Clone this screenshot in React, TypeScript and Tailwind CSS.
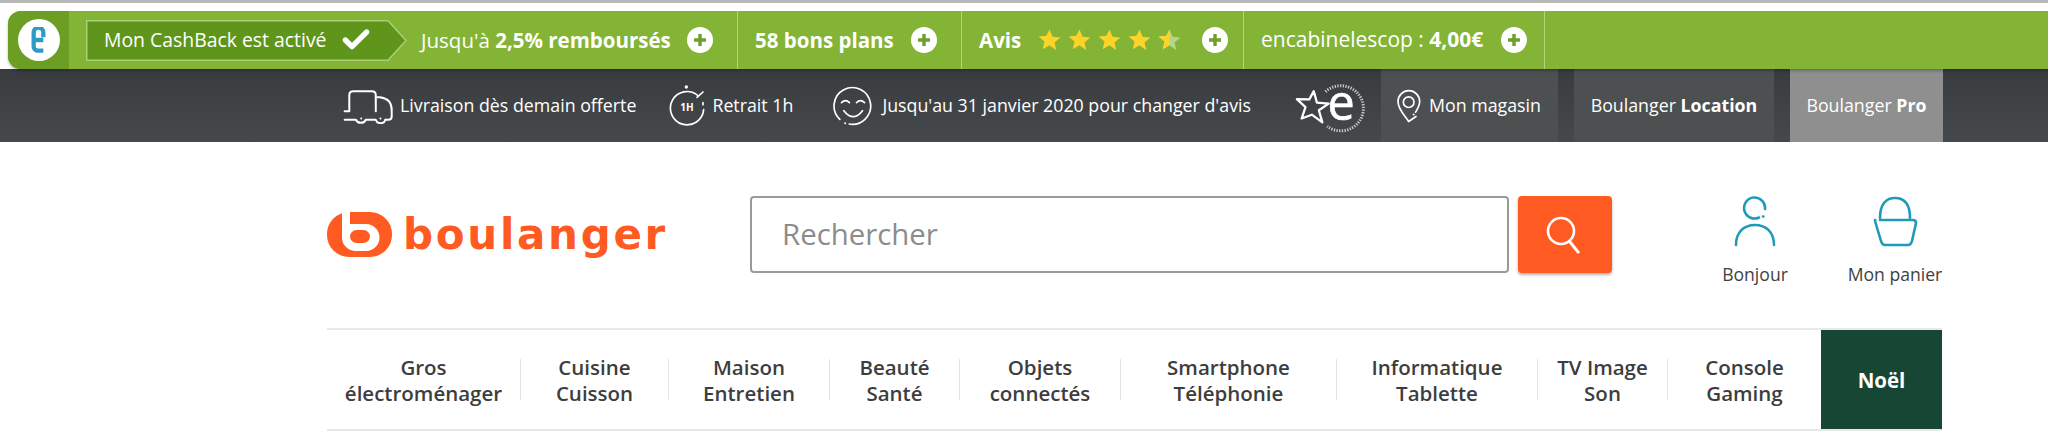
import React from 'react';
import { Check } from 'lucide-react';

const Plus = ({ className = '' }: { className?: string }) => (
  <span className={`flex h-[26px] w-[26px] shrink-0 items-center justify-center rounded-full bg-white ${className}`}>
    <svg viewBox="0 0 14 14" className="h-[14px] w-[14px]" fill="none" stroke="#6e9f2a" strokeWidth="3.4">
      <path d="M7 1v12M1 7h12" />
    </svg>
  </span>
);

const STAR = 'M12 1.5l3 6.9 7.5.7-5.7 4.9 1.7 7.4L12 16.6l-6.5 3.8 1.7-7.4-5.7-4.9 7.5-.7z';

const Stars = () => (
  <div className="ml-[16px] flex gap-[5px]">
    {[0, 1, 2, 3].map((i) => (
      <svg key={i} viewBox="0 0 24 24" className="h-[25px] w-[25px]">
        <path d={STAR} fill="#fdd32a" />
      </svg>
    ))}
    <svg viewBox="0 0 24 24" className="h-[25px] w-[25px]">
      <path d={STAR} fill="#b4d68b" />
      <path d="M12 1.5v15.1l-6.5 3.8 1.7-7.4-5.7-4.9 7.5-.7z" fill="#fdd32a" />
    </svg>
  </div>
);

const Truck = () => (
  <svg viewBox="20 30 160 110" className="h-[37px] w-[53px] shrink-0" fill="none" stroke="#fff" strokeWidth="6" strokeLinecap="round" strokeLinejoin="round">
    <path d="M28 102h14V54q0-12 12-12h56q12 0 12 12v48" />
    <path d="M122 60h12q36 4 36 38v20q0 10-10 10h-9" />
    <path d="M28 128h34a16 14 0 0 0 30 0h30a15 14 0 0 0 29 0" />
    <circle cx="78" cy="124" r="3" fill="#fff" stroke="none" />
    <circle cx="136" cy="124" r="3" fill="#fff" stroke="none" />
  </svg>
);

const Stopwatch = () => (
  <svg viewBox="20 25 120 135" className="h-[45px] w-[40px] shrink-0" fill="none" stroke="#fff" strokeWidth="5" strokeLinecap="round">
    <path d="M112 62A50 50 0 1 0 130 105" />
    <path d="M110 68l18-16M128 84v6" />
    <circle cx="78" cy="37" r="5" fill="#fff" stroke="none" />
    <text x="80" y="110" textAnchor="middle" fontSize="30" fontWeight="700" fill="#fff" stroke="none" fontFamily="'Open Sans', sans-serif">1H</text>
  </svg>
);

const Smile = () => (
  <svg viewBox="515 28 125 120" className="h-[40px] w-[42px] shrink-0" fill="none" stroke="#fff" strokeWidth="5" strokeLinecap="round">
    <path d="M538 128A55 55 0 1 1 566 142" />
    <path d="M543 78q12-12 24 0M588 78q12-12 24 0M550 102q28 36 56 0" />
    <circle cx="554" cy="140" r="3" fill="#fff" stroke="none" />
  </svg>
);

const StarE = () => (
  <svg viewBox="30 10 220 150" className="h-[50px] w-[73px] shrink-0 overflow-visible" fill="none" stroke="#fff">
    <path d="M87 45l10 36 37 3-31 21 11 38-33-24-32 12 12-36-27-25 39 1z" strokeWidth="7" strokeLinejoin="round" transform="translate(6 -3) scale(.96)" />
    <text x="172" y="128" textAnchor="middle" fontSize="146" fill="#fff" stroke="#fff" strokeWidth="2" fontFamily="'Open Sans', sans-serif">e</text>
    <path d="M125 42A68 68 0 1 1 130 146" strokeWidth="9" strokeDasharray="4 4" opacity=".7" />
  </svg>
);

const Pin = () => (
  <svg viewBox="335 48 78 104" className="h-[35px] w-[26px] shrink-0" fill="none" stroke="#fff" strokeWidth="5" strokeLinecap="round" strokeLinejoin="round">
    <path d="M395 133l-22 15c-10-16-32-36-32-60a32 32 0 0 1 65 0c0 12-6 22-12 32" />
    <circle cx="373" cy="90" r="16" />
    <circle cx="388" cy="127" r="3" fill="#fff" stroke="none" />
  </svg>
);

const Person = () => (
  <svg viewBox="0 0 42 52" className="h-[52px] w-[42px]" fill="none" stroke="#1f9ab9" strokeWidth="2.6" strokeLinecap="round">
    <path d="M31 13A10.5 10.5 0 1 0 25 21.5" />
    <path d="M29 20.5h.4" />
    <path d="M2 49c0-13 8-20 19-20s19 7 19 20" />
  </svg>
);

const Basket = () => (
  <svg viewBox="0 0 46 52" className="h-[52px] w-[46px]" fill="none" stroke="#1f9ab9" strokeWidth="2.6" strokeLinecap="round" strokeLinejoin="round">
    <path d="M8 22C8 8 14 2 23 2s15 6 15 20" />
    <path d="M3 24h.3M8 24h33q3 0 3 3l-4 18q-1 4-4 4H13q-3 0-4-4L3 25" />
  </svg>
);

const NAV = [
  { a: 'Gros', b: 'électroménager', w: 'w-[194px]' },
  { a: 'Cuisine', b: 'Cuisson', w: 'w-[148px]' },
  { a: 'Maison', b: 'Entretien', w: 'w-[161px]' },
  { a: 'Beauté', b: 'Santé', w: 'w-[130px]' },
  { a: 'Objets', b: 'connectés', w: 'w-[161px]' },
  { a: 'Smartphone', b: 'Téléphonie', w: 'w-[216px]' },
  { a: 'Informatique', b: 'Tablette', w: 'w-[201px]' },
  { a: 'TV Image', b: 'Son', w: 'w-[130px]' },
  { a: 'Console', b: 'Gaming', w: 'w-[153px]' },
];

export default function App() {
  return (
    <div className="h-[444px] w-[2048px] overflow-hidden bg-white font-['Open_Sans',sans-serif]">
      <div className="h-[3px] bg-[#b8b8b8]" />
      <div className="h-[8px] bg-white pl-2" />

      {/* cashback bar */}
      <div className="relative z-10 ml-2 flex h-[58px] items-center rounded-l-[13px] bg-[#84b435] text-[20.5px] text-white shadow-[0_2px_3px_rgba(0,0,0,0.25)]">
        <div className="flex h-full w-[61px] shrink-0 items-center justify-center rounded-l-[13px] bg-[#6b9e22]">
          <div className="flex h-[42px] w-[42px] items-center justify-center rounded-full bg-white">
            <svg viewBox="0 0 14 24" className="h-[26px] w-[15px]" fill="none" stroke="#2d9ac7" strokeWidth="4">
              <path d="M2.5 12V5a4.5 4.5 0 0 1 9 0v4.5M2.5 12h9M2.5 12v6a4 4 0 0 0 4 4h5" />
            </svg>
          </div>
        </div>
        <div className="relative ml-[17px] flex h-[41px] w-[321px] shrink-0 items-center pl-[18px] text-[19.4px]">
          <svg viewBox="0 0 321 41" className="absolute inset-0 h-[41px] w-[321px]">
            <path d="M.75.75H302L320 20.5 302 40.25H.75z" fill="#5f951a" stroke="#a9cf77" strokeWidth="1.5" />
          </svg>
          <span className="relative whitespace-nowrap">Mon CashBack est activé</span>
          <Check className="relative ml-[13px] h-[32px] w-[32px]" strokeWidth={4} />
        </div>
        <div className="ml-[14px] flex h-full w-[317px] shrink-0 items-center border-r border-[#b3d37f]">
          <span className="whitespace-nowrap">Jusqu'à <b className="font-bold">2,5% remboursés</b></span>
          <Plus className="ml-[16px]" />
        </div>
        <div className="flex h-full w-[224px] shrink-0 items-center border-r border-[#b3d37f] pl-[17px]">
          <b className="font-bold whitespace-nowrap">58 bons plans</b>
          <Plus className="ml-[17px]" />
        </div>
        <div className="flex h-full w-[282px] shrink-0 items-center border-r border-[#b3d37f] pl-[17px]">
          <b className="font-bold">Avis</b>
          <Stars />
          <Plus className="ml-[20px]" />
        </div>
        <div className="flex h-full w-[301px] shrink-0 items-center border-r border-[#b3d37f] pl-[17px] text-[21px]">
          <span className="whitespace-nowrap">encabinelescop : <b className="font-bold">4,00€</b></span>
          <Plus className="ml-[18px]" />
        </div>
      </div>

      {/* dark links bar */}
      <div className="flex h-[73px] items-center bg-gradient-to-b from-[#393c3f] to-[#46494b] pl-[342px] text-[17.8px] whitespace-nowrap text-white">
        <Truck />
        <span className="ml-[5px]">Livraison dès demain offerte</span>
        <div className="ml-[31px]"><Stopwatch /></div>
        <span className="ml-[5px]">Retrait 1h</span>
        <div className="ml-[39px]"><Smile /></div>
        <span className="ml-[8px]">Jusqu'au 31 janvier 2020 pour changer d'avis</span>
        <div className="ml-[43px]"><StarE /></div>
        <div className="ml-[14px] flex h-full w-[177px] items-center bg-[#4c5051] pl-[15px]">
          <Pin />
          <span className="ml-[7px]">Mon magasin</span>
        </div>
        <div className="ml-[16px] flex h-full w-[200px] items-center justify-center bg-[#4c5051]">
          <span>Boulanger <b className="font-bold">Location</b></span>
        </div>
        <div className="ml-[16px] flex h-full w-[153px] items-center justify-center bg-[#8f8f8f]">
          <span>Boulanger <b className="font-bold">Pro</b></span>
        </div>
      </div>

      {/* logo + search */}
      <div className="flex h-[186px] items-start pl-[327px] pt-[54px]">
        <div className="mt-[16px] flex w-[423px] items-start">
          <svg viewBox="0 0 65 45" className="h-[45px] w-[65px] shrink-0">
            <rect width="65" height="45" rx="22" fill="#ff5a21" />
            <path d="M15 0H23V12H39A13.5 13.5 0 0 1 39 39H28A13.5 13.5 0 0 1 15 25.5Z" fill="#fff" />
            <rect x="23" y="18" width="20" height="13" rx="6.5" fill="#ff5a21" />
          </svg>
          <span className="ml-[11px] -mt-[10px] font-['DejaVu_Sans',sans-serif] text-[42px] leading-[66px] font-bold tracking-[2.7px] text-[#ff5a21]">boulanger</span>
        </div>
        <div className="flex h-[77px] w-[759px] items-center rounded-[4px] border-2 border-[#9a9a9a] bg-white pl-[30px] text-[29.4px] text-[#8c8c8c]">
          Rechercher
        </div>
        <div className="ml-[9px] flex h-[77px] w-[94px] items-center justify-center rounded-[4px] bg-[#ff5a21] shadow-[0_2px_3px_rgba(0,0,0,0.3)]">
          <svg viewBox="0 0 40 40" className="h-[40px] w-[40px]" fill="none" stroke="#fff" strokeWidth="2.6" strokeLinecap="square">
            <circle cx="16" cy="16" r="13" />
            <path d="M25 27l8 10" strokeWidth="3" />
          </svg>
        </div>
        <div className="ml-[98px] flex w-[90px] flex-col items-center">
          <Person />
          <span className="mt-[14px] text-[17.6px] leading-[24px] text-[#3f3f3f]">Bonjour</span>
        </div>
        <div className="ml-[45px] flex w-[100px] flex-col items-center">
          <Basket />
          <span className="mt-[14px] text-[17.6px] leading-[24px] whitespace-nowrap text-[#3f3f3f]">Mon panier</span>
        </div>
      </div>

      {/* main nav */}
      <nav className="ml-[327px] flex h-[103px] w-[1615px] items-center border-y-2 border-[#e8e8e8] text-[20.5px] leading-[26px] font-semibold text-[#3d3d3d]">
        {NAV.map((item, i) => (
          <div
            key={item.a}
            className={`flex h-[41px] items-center justify-center text-center ${item.w} ${i < NAV.length - 1 ? 'border-r border-[#e3e3e3]' : ''}`}
          >
            <span>{item.a}<br />{item.b}</span>
          </div>
        ))}
        <div className="flex h-full w-[121px] items-center justify-center bg-[#154734] font-bold text-white">Noël</div>
      </nav>
    </div>
  );
}
